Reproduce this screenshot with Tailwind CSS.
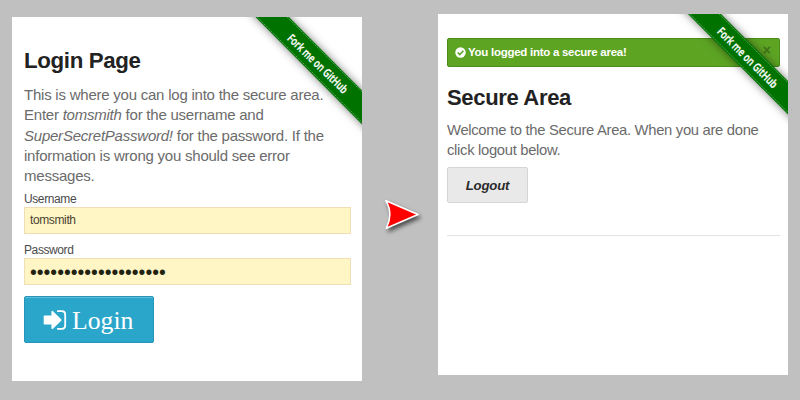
<!DOCTYPE html>
<html lang="en">
<head>
<meta charset="utf-8">
<title>Login flow</title>
<script src="https://cdn.jsdelivr.net/npm/@tailwindcss/browser@4"></script>
</head>
<body class="w-[800px] h-[400px] overflow-hidden bg-[#c0c0c0] flex items-start font-['Liberation_Sans',Arial,sans-serif] text-[#222]">

<main class="relative overflow-hidden bg-white w-[350px] h-[364px] ml-3 mt-[17px] pl-3 pr-[11px] pt-[29px] shrink-0">
  <h1 class="font-bold text-[22.3px] tracking-[-0.35px] leading-[30px]">Login Page</h1>
  <p class="mt-[9px] text-[15px] tracking-[-0.23px] leading-[20.3px] text-[#6b6b6b] whitespace-nowrap">This is where you can log into the secure area.<br>Enter <em>tomsmith</em> for the username and<br><em>SuperSecretPassword!</em> for the password. If the<br>information is wrong you should see error<br>messages.</p>
  <div class="mt-[6px] text-[12px] tracking-[-0.4px] leading-[14px] text-[#4a4a4a]">Username</div>
  <div class="mt-[1px] h-[27px] border border-[#f0deb4] bg-[#fff5c5] pl-[5px] text-[12px] tracking-[-0.38px] leading-[25px] text-[#4a4433]">tomsmith</div>
  <div class="mt-[9px] text-[12px] tracking-[-0.4px] leading-[14px] text-[#4a4a4a]">Password</div>
  <div class="mt-[1px] h-[27px] border border-[#f0deb4] bg-[#fff5c5] pl-[5px] text-[19.4px] leading-[26px] text-[#222211]">••••••••••••••••••••</div>
  <button class="mt-[11px] w-[130px] h-[47px] rounded-[2px] border border-[#2595b9] bg-[#2ba6cb] flex items-center pl-[18px] text-white shadow-[inset_0_1px_0_rgba(255,255,255,0.25)]">
    <svg class="w-[24px] h-[20px] shrink-0" viewBox="0 0 24 20" fill="none"><path d="M1.6 5.4H8.4V1.9Q8.6.2 10 1.3L18.2 9.2q.8.8 0 1.6L10 18.7q-1.4 1.1-1.6-.6V14.6H1.6q-.9 0-.9-.9V6.3q0-.9.9-.9z" fill="#fff"/><path d="M14.8 1.2h4.2a3.3 3.3 0 0 1 3.2 3.3v11a3.3 3.3 0 0 1-3.2 3.3h-4.2" stroke="#fff" stroke-width="1.8" stroke-linecap="round"/></svg>
    <span class="ml-[5px] translate-y-px font-['Liberation_Serif','Times_New_Roman',serif] text-[25.7px] leading-[30px]">Login</span>
  </button>
  <svg class="absolute left-0 top-0 w-[350px] h-[130px]" viewBox="0 0 350 130">
    <g class="drop-shadow-[0_0_4px_rgba(0,0,0,0.5)]"><path d="M233.5-10 267-10 370 93.5 370 127.5z" fill="#007200"/></g>
    <path d="M236.3-9 360 115.5M266.2-9 360 84.8" stroke="#7fc27f" stroke-opacity=".75" stroke-width="1" stroke-dasharray="1.5 1" fill="none"/>
    <text transform="translate(305.7 46.8) rotate(44.2)" y="4" text-anchor="middle" textLength="79" lengthAdjust="spacingAndGlyphs" class="font-['Open_Sans',sans-serif] font-semibold text-[11.5px]" fill="#fff" stroke="#fff" stroke-width=".3">Fork me on GitHub</text>
  </svg>
</main>

<svg class="w-[42px] h-[42px] ml-[19px] mt-[195px] shrink-0" viewBox="0 0 42 42"><path class="drop-shadow-[2px_3px_2px_rgba(0,0,0,0.6)]" d="M5 5.8 37 19.6 5.3 33.3Q12.5 19 5 5.8z" fill="#f00" stroke="#fff" stroke-width="1.6" stroke-linejoin="round"/></svg>

<section class="relative overflow-hidden bg-white w-[350px] h-[361px] ml-[15px] mt-[14px] pl-[9px] pr-2 pt-6 shrink-0">
  <div class="h-[29px] rounded-[2px] border border-[#4b8e1b] bg-[#5da423] flex items-center text-white pl-[7px] pr-2">
    <svg class="w-[11px] h-[11px] shrink-0" viewBox="0 0 11 11"><circle cx="5.5" cy="5.5" r="5.2" fill="#fff"/><path d="m2.7 5.5 2 2 3.7-3.8" stroke="#5da423" stroke-width="1.6" fill="none"/></svg>
    <span class="ml-[2px] -translate-y-px font-bold text-[11.5px] tracking-[-0.27px] leading-[14px]">You logged into a secure area!</span>
    <span class="ml-auto font-bold text-[14px] leading-[14px] text-[#3f7318] -translate-y-[3px]">×</span>
  </div>
  <h2 class="mt-[16px] font-bold text-[22px] tracking-[-0.33px] leading-[30px]">Secure Area</h2>
  <p class="mt-[7px] text-[14.8px] tracking-[-0.31px] leading-[20.2px] text-[#6b6b6b] whitespace-nowrap">Welcome to the Secure Area. When you are done<br>click logout below.</p>
  <button class="mt-[6.6px] block w-[81px] h-[36px] rounded-[2px] border border-[#d5d5d5] bg-[#e9e9e9] font-bold italic text-[13.2px] tracking-[-0.2px] leading-[35px] text-[#2b2b2b]">Logout</button>
  <div class="mt-[32px] h-px bg-[#e2e2e2]"></div>
  <svg class="absolute left-0 top-0 w-[350px] h-[130px]" viewBox="0 0 350 130">
    <g class="drop-shadow-[0_0_4px_rgba(0,0,0,0.5)]"><path d="M240-10 273-10 370 87 370 120.5z" fill="#007200"/></g>
    <path d="M242.8-9 360 108.5M272.2-9 360 78.8" stroke="#7fc27f" stroke-opacity=".75" stroke-width="1" stroke-dasharray="1.5 1" fill="none"/>
    <text transform="translate(309.5 43.8) rotate(45)" y="4" text-anchor="middle" textLength="80" lengthAdjust="spacingAndGlyphs" class="font-['Open_Sans',sans-serif] font-semibold text-[11.5px]" fill="#fff" stroke="#fff" stroke-width=".3">Fork me on GitHub</text>
  </svg>
</section>
</body>
</html>
